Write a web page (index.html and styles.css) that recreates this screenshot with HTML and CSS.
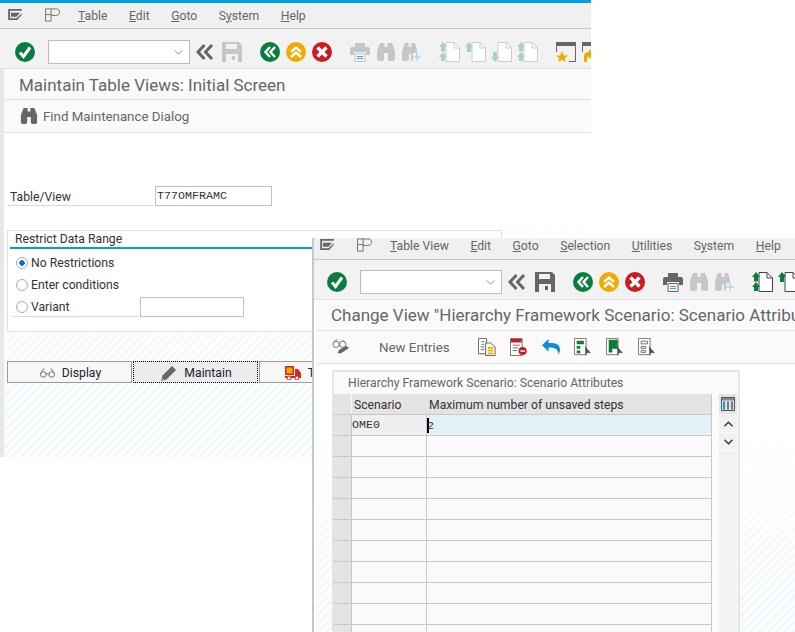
FILE: index.html
```html
<!DOCTYPE html>
<html lang="en">
<head>
    <meta charset="UTF-8">
    <title>Maintain Table Views</title>
    <link rel="stylesheet" href="styles.css">
</head>
<body>
    <svg class="defs" width="0" height="0">
        <symbol id="i-menu" viewBox="0 0 16 12"><path d="M0 0H15V2H2V10H9L15 4.500V6L10 12H0Z M3 4H13L9 8.500H3Z" fill="#666" fill-rule="evenodd"/></symbol>
        <symbol id="i-layout" viewBox="0 0 16 14"><path d="M.5 6.500V.5H6.500V13.500H.5V6.500H6.500 M6.500 .5H11Q15.500 .5 15.500 4T11 7.500H6.500" fill="none" stroke="#7a6a60"/></symbol>
        <symbol id="i-check" viewBox="0 0 20 20"><circle cx="10" cy="10" r="10" fill="#0a7d3e"/><path d="M5 10.500L8.500 14.500L15 5.500" fill="none" stroke="#fff" stroke-width="3"/></symbol>
        <symbol id="i-back" viewBox="0 0 20 20"><circle cx="10" cy="10" r="10" fill="#0a7d3e"/><path d="M10 5L5.500 10L10 15M15 5L10.500 10L15 15" fill="none" stroke="#fff" stroke-width="2.400"/></symbol>
        <symbol id="i-up" viewBox="0 0 20 20"><circle cx="10" cy="10" r="10" fill="#f0ab00"/><path d="M5 10L10 5.500L15 10M5 15L10 10.500L15 15" fill="none" stroke="#fff" stroke-width="2.400"/></symbol>
        <symbol id="i-cancel" viewBox="0 0 20 20"><circle cx="10" cy="10" r="10" fill="#cb1a22"/><path d="M5.500 5.500L14.500 14.500M14.500 5.500L5.500 14.500" fill="none" stroke="#fff" stroke-width="3.400"/></symbol>
        <symbol id="i-dbl" viewBox="0 0 18 16"><path d="M8.500 1L2 8L8.500 15M16 1L9.500 8L16 15" fill="none" stroke="#666" stroke-width="3"/></symbol>
        <symbol id="i-save" viewBox="0 0 20 20"><path fill-rule="evenodd" d="M0 0H17L20 3V20H0Z M4 2V7H15V2Z M4 12V20H16V12Z M10 14H13V18H10Z" fill="currentColor"/></symbol>
        <symbol id="i-print" viewBox="0 0 20 20"><path d="M5 5V1H15V5H18Q20 5 20 7V13H16V10H4V13H0V7Q0 5 2 5Z" fill="currentColor"/><path d="M5 11.500H15V19.500H5Z" fill="none" stroke="currentColor"/><path d="M7 14.500H13M7 16.500H13" stroke="#3aa6e8"/></symbol>
        <symbol id="i-bino" viewBox="0 0 20 20"><path d="M4 1H8.500V5H11.500V1H16L19 9V17Q19 19 17 19H14Q12 19 12 17V11H8V17Q8 19 6 19H3Q1 19 1 17V9Z" fill="currentColor"/></symbol>
        <symbol id="i-binoplus" viewBox="0 0 20 20"><path d="M3 1H6.500V5H9.500V1H13L15 8V11H11V17Q11 19 9 19V12H7V17Q7 19 5 19H2Q0 19 0 17V9Z" fill="currentColor"/><path d="M15 11V19M11 15H19" stroke="#8cd0f5" fill="none"/></symbol>
        <symbol id="i-page" viewBox="0 0 20 20"><path d="M6 .5H14L19.500 6V19.500H6Z" fill="#fff" stroke="currentColor"/><path d="M14 .5V6H19.500" fill="none" stroke="currentColor"/></symbol>
        <symbol id="i-star" viewBox="0 0 20 20"><path d="M0 0H20V4H0Z" fill="#666"/><path d="M.5 4V10M19.500 4V19.500H13" fill="none" stroke="#666"/><path d="M6 9L7.800 13.500H12L8.800 16.200L10 20L6 17.800L2 20L3.200 16.200L0 13.500H4.200Z" fill="#f0ab00"/></symbol>
        <symbol id="i-recent" viewBox="0 0 20 20"><path d="M0 0H20V4H0Z" fill="#666"/><path d="M.5 4V10" fill="none" stroke="#666"/><path d="M2 20V14Q2 10 7 10V7L13 12L7 17V14Q5 14 5 20Z" fill="#f0ab00"/></symbol>
        <symbol id="i-glasses" viewBox="0 0 16 10"><path d="M.5 6.500L3 1H5M15.500 6.500L13 1H11" fill="none" stroke="#7b8794"/><circle cx="3.500" cy="6.500" r="3" fill="none" stroke="#666"/><circle cx="12.500" cy="6.500" r="3" fill="none" stroke="#666"/><path d="M6.500 6H9.500" stroke="#666"/></symbol>
        <symbol id="i-pencil" viewBox="0 0 16 16"><path d="M0 16L1.500 10.500L11 1L15 5L5.500 14.500Z" fill="#666"/><path d="M0 16L1 12.500L3.500 15Z" fill="#aaa"/></symbol>
        <symbol id="i-truck" viewBox="0 0 16 14"><path d="M0 0H9V9H0Z" fill="#d9261c"/><path d="M1.500 1.500H7.500V7.500H1.500Z" fill="#f0ab00"/><path d="M10 3H13L16 7V12H0V10H10Z" fill="#d9261c"/><circle cx="4" cy="12" r="2" fill="#fff" stroke="#d9261c"/><circle cx="12" cy="12" r="2" fill="#fff" stroke="#d9261c"/></symbol>
        <symbol id="i-glasspen" viewBox="0 0 20 20"><circle cx="4.500" cy="7" r="3.500" fill="none" stroke="#666"/><circle cx="12" cy="7" r="3.500" fill="none" stroke="#666"/><path d="M1 6L4 2H6M15 6L12 2" fill="none" stroke="#888"/><path d="M6 17L8 13L16 9L19 11L10 17Z" fill="#666"/></symbol>
        <symbol id="i-copy" viewBox="0 0 20 20"><path d="M.5 .5H9.500V17.500H.5Z M4 4H7M4 7H7M3 10H7M3 13H7" fill="#fff" stroke="#555"/><path d="M8.500 5.500H14L19 10V19.500H8.500Z" fill="#fff" stroke="#555"/><path d="M11 10H17V12H11ZM11 13H17V15H11ZM11 16H17V18H11Z" fill="#f0ab00"/></symbol>
        <symbol id="i-delete" viewBox="0 0 20 20"><path d="M.5 .5H13.500V19.500H.5Z" fill="#fff" stroke="#666"/><path d="M1 1H13V5H1Z" fill="#cb1a22"/><path d="M3 8H11M3 11H9M3 14H8" stroke="#666"/><circle cx="14" cy="14.500" r="4.500" fill="#cb1a22"/><path d="M11.500 14.500H16.500" stroke="#fff" stroke-width="1.600"/></symbol>
        <symbol id="i-undo" viewBox="0 0 18 16"><path d="M6.500 0V4H10Q18 4 18 11Q18 13 16.500 15.500Q16 9 10 8.500H6.500V12.500L0 6.200Z" fill="#0a8fd6"/></symbol>
        <symbol id="i-selall" viewBox="0 0 20 20"><path d="M.5 .5H13.500V18.500H.5Z" fill="#fff" stroke="#7a6a60"/><path d="M3 3H11V7H3ZM3 9H7V12H3ZM3 14H7V17H3Z" fill="#0a7d3e"/><path d="M12 9L19 17L15 16.500L13 20Z" fill="#555"/></symbol>
        <symbol id="i-selblock" viewBox="0 0 20 20"><path d="M.5 .5H13.500V18.500H.5Z" fill="#fff" stroke="#7a6a60"/><path d="M3 2H13V12H7V16H3Z" fill="#0a7d3e"/><path d="M12 9L19 17L15 16.500L13 20Z" fill="#555"/></symbol>
        <symbol id="i-selnone" viewBox="0 0 20 20"><path d="M.5 .5H13.500V18.500H.5Z" fill="#fff" stroke="#7a6a60"/><path d="M3.500 3.500H10.500V6.500H3.500ZM3.500 9.500H8.500V11.500H3.500ZM3.500 14H8.500V16H3.500Z" fill="none" stroke="#666"/><path d="M12 9L19 17L15 16.500L13 20Z" fill="#555"/></symbol>
        <symbol id="i-settings" viewBox="0 0 14 14"><path d="M.5 .5H13.500V13.500H.5Z" fill="#dfe3e6" stroke="#555"/><path d="M1 1H13V3.500H1Z" fill="#8a8a8a"/><path d="M2 4.500H4V12.500H2Z" fill="#0a9ee0"/><path d="M6 4.500H8V12.500H6ZM10 4.500H12V12.500H10Z" fill="#777"/></symbol>
        <symbol id="i-chev-up" viewBox="0 0 10 6"><path d="M.5 5.500L5 1L9.500 5.500" fill="none" stroke="#234" stroke-width="1.500"/></symbol>
        <symbol id="i-chev-down" viewBox="0 0 10 6"><path d="M.5 .5L5 5L9.500 .5" fill="none" stroke="#234" stroke-width="1.500"/></symbol>
        <symbol id="i-chev-combo" viewBox="0 0 10 6"><path d="M.5 .5L5 5L9.500 .5" fill="none" stroke="#777"/></symbol>
        <symbol id="i-arrows-both" viewBox="0 0 8 20"><path d="M4 0L8 5H6V9H8L4 9.500L0 9H2V5H0ZM4 10L8 15H6V19H2V15H0Z" fill="currentColor"/></symbol>
        <symbol id="i-arrow-up" viewBox="0 0 8 10"><path d="M4 0L8 5H6V10H2V5H0Z" fill="currentColor"/></symbol>
        <symbol id="i-arrow-down" viewBox="0 0 8 10"><path d="M4 10L8 5H6V0H2V5H0Z" fill="currentColor"/></symbol>
    </svg>

    <!-- first window, behind -->
    <div class="win win-back">
        <div class="menubar">
            <svg class="ico-menu"><use href="#i-menu"/></svg>
            <svg class="ico-layout"><use href="#i-layout"/></svg>
            <nav class="menu">
                <span><u>T</u>able</span>
                <span><u>E</u>dit</span>
                <span><u>G</u>oto</span>
                <span>S<u>y</u>stem</span>
                <span><u>H</u>elp</span>
            </nav>
        </div>
        <div class="toolbar off">
            <span class="ti"><svg class="ic"><use href="#i-check"/></svg></span>
            <span class="combo"><svg class="combo-arrow"><use href="#i-chev-combo"/></svg></span>
            <span class="ti nudge-a"><svg class="ic-dbl"><use href="#i-dbl"/></svg></span>
            <span class="ti dim"><svg class="ic"><use href="#i-save"/></svg></span>
            <span class="ti gap"><svg class="ic"><use href="#i-back"/></svg></span>
            <span class="ti"><svg class="ic"><use href="#i-up"/></svg></span>
            <span class="ti"><svg class="ic"><use href="#i-cancel"/></svg></span>
            <span class="ti gap dim"><svg class="ic"><use href="#i-print"/></svg></span>
            <span class="ti dim"><svg class="ic"><use href="#i-bino"/></svg></span>
            <span class="ti dim"><svg class="ic"><use href="#i-binoplus"/></svg></span>
            <span class="ti gap pg"><svg class="ic"><use href="#i-page"/></svg><svg class="pg-arrow"><use href="#i-arrows-both"/></svg></span>
            <span class="ti pg"><svg class="ic"><use href="#i-page"/></svg><svg class="pg-arrow one top"><use href="#i-arrow-up"/></svg></span>
            <span class="ti pg"><svg class="ic"><use href="#i-page"/></svg><svg class="pg-arrow one bottom"><use href="#i-arrow-down"/></svg></span>
            <span class="ti pg"><svg class="ic"><use href="#i-page"/></svg><svg class="pg-arrow"><use href="#i-arrows-both"/></svg></span>
            <span class="ti gap"><svg class="ic"><use href="#i-star"/></svg></span>
            <span class="ti"><svg class="ic"><use href="#i-recent"/></svg></span>
        </div>
        <div class="main">
            <h1 class="title">Maintain Table Views: Initial Screen</h1>
            <div class="apptools">
                <svg class="ic-app"><use href="#i-bino"/></svg>
                <span class="find">Find Maintenance Dialog</span>
            </div>
            <div class="screen">
                <div class="field-row">
                    <label class="lbl">Table/View</label>
                    <span class="input mono">T77OMFRAMC</span>
                </div>
                <fieldset class="range">
                    <div class="range-title">Restrict Data Range</div>
                    <div class="radio-row"><span class="radio on"></span>No Restrictions</div>
                    <div class="radio-row"><span class="radio"></span>Enter conditions</div>
                    <div class="radio-row variant">
                        <span class="variant-lbl"><span class="radio"></span>Variant</span>
                        <span class="input variant-input"></span>
                    </div>
                </fieldset>
                <div class="buttons">
                    <span class="btn"><svg class="btn-glass"><use href="#i-glasses"/></svg>Display</span>
                    <span class="btn focus"><svg class="btn-pen"><use href="#i-pencil"/></svg>Maintain</span>
                    <span class="btn"><svg class="btn-truck"><use href="#i-truck"/></svg>Transport</span>
                </div>
            </div>
        </div>
    </div>

    <!-- second window, on top -->
    <div class="win win-top">
        <div class="menubar">
            <svg class="ico-menu"><use href="#i-menu"/></svg>
            <svg class="ico-layout"><use href="#i-layout"/></svg>
            <nav class="menu">
                <span><u>T</u>able View</span>
                <span><u>E</u>dit</span>
                <span><u>G</u>oto</span>
                <span><u>S</u>election</span>
                <span><u>U</u>tilities</span>
                <span>S<u>y</u>stem</span>
                <span><u>H</u>elp</span>
            </nav>
        </div>
        <div class="toolbar">
            <span class="ti"><svg class="ic"><use href="#i-check"/></svg></span>
            <span class="combo"><svg class="combo-arrow"><use href="#i-chev-combo"/></svg></span>
            <span class="ti nudge-a"><svg class="ic-dbl"><use href="#i-dbl"/></svg></span>
            <span class="ti"><svg class="ic"><use href="#i-save"/></svg></span>
            <span class="ti gap"><svg class="ic"><use href="#i-back"/></svg></span>
            <span class="ti"><svg class="ic"><use href="#i-up"/></svg></span>
            <span class="ti"><svg class="ic"><use href="#i-cancel"/></svg></span>
            <span class="ti gap"><svg class="ic"><use href="#i-print"/></svg></span>
            <span class="ti dim"><svg class="ic"><use href="#i-bino"/></svg></span>
            <span class="ti dim"><svg class="ic"><use href="#i-binoplus"/></svg></span>
            <span class="ti gap pg"><svg class="ic"><use href="#i-page"/></svg><svg class="pg-arrow"><use href="#i-arrows-both"/></svg></span>
            <span class="ti pg"><svg class="ic"><use href="#i-page"/></svg><svg class="pg-arrow one top"><use href="#i-arrow-up"/></svg></span>
        </div>
        <div class="main">
            <h1 class="title">Change View "Hierarchy Framework Scenario: Scenario Attributes": Overview</h1>
            <div class="apptools">
                <svg class="ic-app glasspen"><use href="#i-glasspen"/></svg>
                <span class="new-entries">New Entries</span>
                <span class="app-icons">
                    <svg class="ic-app"><use href="#i-copy"/></svg>
                    <svg class="ic-app"><use href="#i-delete"/></svg>
                    <svg class="ic-app"><use href="#i-undo"/></svg>
                    <svg class="ic-app"><use href="#i-selall"/></svg>
                    <svg class="ic-app"><use href="#i-selblock"/></svg>
                    <svg class="ic-app"><use href="#i-selnone"/></svg>
                </span>
            </div>
            <div class="screen screen-top">
                <section class="tablebox">
                    <div class="tablebox-title">Hierarchy Framework Scenario: Scenario Attributes</div>
                    <div class="tablewrap">
                        <table class="grid">
                            <thead>
                                <tr><th class="rh"></th><th class="c1">Scenario</th><th>Maximum number of unsaved steps</th></tr>
                            </thead>
                            <tbody>
                                <tr class="active"><td class="rh"></td><td class="key mono">OME0</td><td class="edit mono"><span class="caret"></span>2</td></tr>
                                <tr><td class="rh"></td><td></td><td></td></tr>
                                <tr><td class="rh"></td><td></td><td></td></tr>
                                <tr><td class="rh"></td><td></td><td></td></tr>
                                <tr><td class="rh"></td><td></td><td></td></tr>
                                <tr><td class="rh"></td><td></td><td></td></tr>
                                <tr><td class="rh"></td><td></td><td></td></tr>
                                <tr><td class="rh"></td><td></td><td></td></tr>
                                <tr><td class="rh"></td><td></td><td></td></tr>
                                <tr><td class="rh"></td><td></td><td></td></tr>
                                <tr><td class="rh"></td><td></td><td></td></tr>
                            </tbody>
                        </table>
                        <div class="scroller">
                            <span class="sc-btn sc-head"><svg class="sc-settings"><use href="#i-settings"/></svg></span>
                            <span class="sc-btn"><svg class="sc-chev"><use href="#i-chev-up"/></svg></span>
                            <span class="sc-btn"><svg class="sc-chev"><use href="#i-chev-down"/></svg></span>
                            <span class="sc-track"></span>
                        </div>
                    </div>
                </section>
            </div>
        </div>
    </div>
</body>
</html>
```

FILE: styles.css
```css
html, body {
    margin: 0;
    padding: 0;
}
body {
    width: 795px;
    height: 632px;
    overflow: hidden;
    position: relative;
    background-color: #fff;
    font-family: Roboto, Arial, sans-serif;
    font-size: 12.2px;
    color: #333;
}
.defs {
    position: absolute;
}
.mono {
    font-family: "Liberation Mono", monospace;
    font-size: 11.67px;
}

/* windows sit on a free desktop */
.win {
    position: absolute;
    overflow: hidden;
    display: flex;
    flex-direction: column;
    background-color: #f0f0f0;
}
.win-back {
    left: 0;
    top: 0;
    width: 591px;
    height: 457px;
    border-top: 3px solid #009de0;
    box-sizing: border-box;
}
.win-top {
    left: 312px;
    top: 238px;
    width: 483px;
    height: 394px;
    border-left: 2px solid #c8c8c8;
    box-sizing: border-box;
}

/* menu bar */
.menubar {
    display: flex;
    align-items: center;
    height: 26px;
    flex: none;
    box-sizing: border-box;
    padding-left: 8px;
    border-bottom: 1px solid #c6c6c6;
    color: #666;
}
.win-top .menubar {
    height: 22px;
    padding-left: 6px;
    padding-bottom: 6px;
}
.ico-menu {
    width: 15px;
    height: 11px;
    margin-bottom: 3px;
}
.ico-layout {
    width: 15px;
    height: 14px;
    margin-left: 22px;
    margin-bottom: 1px;
}
.menu {
    display: flex;
    gap: 21.500px;
    margin-left: 18px;
    white-space: nowrap;
}

/* system toolbar */
.toolbar {
    display: flex;
    align-items: center;
    flex: none;
    height: 40px;
    box-sizing: border-box;
    padding-left: 12px;
    padding-top: 6px;
    border-bottom: 1px solid #e2e2e2;
    background-color: #f2f2f2;
    color: #666;
    white-space: nowrap;
}
.win-top .toolbar {
    padding-left: 10px;
    padding-top: 4px;
}
.ti {
    position: relative;
    display: flex;
    flex: none;
    width: 26px;
    height: 24px;
    align-items: center;
    justify-content: center;
}
.ti.gap {
    margin-left: 12px;
}
.ti.nudge-a {
    margin-left: 2px;
    margin-right: 1px;
}
.win-top .ti.nudge-a {
    margin-right: 2px;
}
.ti.dim {
    color: #c6c6c6;
}
.ic {
    width: 20px;
    height: 20px;
}
.ic-dbl {
    width: 18px;
    height: 16px;
}
.combo {
    position: relative;
    flex: none;
    width: 142px;
    height: 24px;
    margin-left: 10px;
    box-sizing: border-box;
    border: 1px solid #bdbdbd;
    background-color: #fff;
}
.combo-arrow {
    position: absolute;
    right: 6px;
    top: 9px;
    width: 9px;
    height: 5px;
}
.pg {
    color: #444;
}
.pg-arrow {
    position: absolute;
    left: 2px;
    top: 2px;
    width: 8px;
    height: 20px;
    color: #0a7d3e;
}
.pg-arrow.one {
    height: 10px;
}
.pg-arrow.bottom {
    top: 12px;
}
.off .pg {
    color: #ccc;
}
.off .pg-arrow {
    color: #a8d3bb;
}

/* title and application toolbar */
.main {
    flex: 1;
    min-height: 0;
    display: flex;
    flex-direction: column;
    background-color: #fafafa;
    border-left: 4px solid #e8e8e8;
}
.win-top .main {
    border-left: 2px solid #fff;
}
.title {
    flex: none;
    height: 31px;
    margin: 0;
    padding-left: 15px;
    box-sizing: border-box;
    border-bottom: 1px solid #e2e2e2;
    font-size: 17px;
    font-weight: normal;
    line-height: 30px;
    color: #666;
    white-space: nowrap;
    overflow: hidden;
}
.win-back .title {
    line-height: 32px;
}
.apptools {
    display: flex;
    align-items: center;
    flex: none;
    height: 33px;
    box-sizing: border-box;
    padding-left: 16px;
    border-bottom: 1px solid #e2e2e2;
    font-size: 13.3px;
    color: #666;
}
.ic-app {
    width: 18px;
    height: 18px;
    color: #666;
}
.find {
    margin-left: 5px;
    margin-top: 1px;
}
.new-entries {
    margin-left: 29px;
}
.app-icons {
    display: flex;
    gap: 14px;
    margin-left: 28px;
}

/* first window content */
.screen {
    flex: 1;
    min-height: 0;
    background-color: #fff;
    background-image:
        linear-gradient(#fff 25%, rgba(255, 255, 255, 0) 85%),
        repeating-linear-gradient(-45deg, #f3f8fb 0 3px, #fcfdfe 3px 6px);
    padding: 53px 0 0 4px;
}
.field-row {
    display: flex;
    align-items: flex-end;
    gap: 2px;
}
.lbl {
    width: 145px;
    box-sizing: border-box;
    padding-left: 2px;
    height: 19px;
    line-height: 20px;
    border-bottom: 1px solid #d8d8d8;
}
.input {
    display: block;
    height: 20px;
    box-sizing: border-box;
    border: 1px solid #c0c0c0;
    background-color: #fff;
    line-height: 18px;
    color: #333;
}
.field-row .input {
    width: 117px;
    padding-left: 1px;
}
.range {
    width: 495px;
    height: 102px;
    margin: 24px 0 0 -1px;
    padding: 0;
    box-sizing: border-box;
    border: 1px solid #e0e0e0;
    background-color: #fff;
}
.range-title {
    height: 16px;
    margin-left: 2px;
    padding-left: 5px;
    line-height: 16px;
    border-bottom: 2px solid #009de0;
}
.radio-row {
    display: flex;
    align-items: center;
    height: 22px;
    padding-left: 8px;
    white-space: nowrap;
}
.range-title + .radio-row {
    margin-top: 3px;
}
.radio {
    width: 12px;
    height: 12px;
    flex: none;
    box-sizing: border-box;
    margin-right: 3px;
    border: 1px solid #aaa;
    border-radius: 50%;
    background-color: #fff;
}
.radio.on {
    background: radial-gradient(circle, #0a6ed1 0 2.500px, #fff 3px);
}
.variant {
    padding-left: 5px;
    align-items: flex-end;
    margin-top: -1px;
}
.variant-lbl {
    display: flex;
    align-items: center;
    width: 125px;
    height: 19px;
    padding-left: 3px;
    box-sizing: border-box;
    border-bottom: 1px solid #d8d8d8;
}
.variant-input {
    width: 104px;
    margin-left: 2px;
}
.buttons {
    display: flex;
    gap: 1px;
    margin: 29px 0 0 -1px;
}
.btn {
    display: flex;
    align-items: center;
    justify-content: center;
    flex: none;
    width: 125px;
    height: 22px;
    box-sizing: border-box;
    padding: 1px 0 0 2px;
    border: 1px solid #9c9c9c;
    background-color: #f7f7f7;
    color: #223;
}
.btn.focus {
    background-color: #ebebeb;
    border: 1px dotted #000;
}
.btn-glass {
    width: 15px;
    height: 10px;
    margin-right: 7px;
}
.btn-pen {
    width: 16px;
    height: 16px;
    margin-right: 7px;
}
.btn-truck {
    width: 16px;
    height: 14px;
    margin-right: 7px;
}

/* second window content */
.screen-top {
    padding: 6px 0 0 16px;
    overflow: hidden;
    background-image:
        linear-gradient(#fff 25%, rgba(255, 255, 255, 0) 90%),
        repeating-linear-gradient(-45deg, #f3f8fb 0 3px, #fcfdfe 3px 6px);
}
.tablebox {
    width: 408px;
    height: 300px;
    box-sizing: border-box;
    border: 2px solid #e6e6e6;
    border-bottom: 0;
    background-color: #fafafa;
}
.tablebox-title {
    height: 22px;
    padding-left: 14px;
    line-height: 23px;
    color: #666;
}
.tablewrap {
    display: flex;
    align-items: flex-start;
}
.grid {
    flex: none;
    width: 379px;
    margin-left: -1px;
    border-collapse: collapse;
    table-layout: fixed;
    border-right: 1px solid #c8c8c8;
}
.grid th,
.grid td {
    height: 20px;
    padding: 0;
    box-sizing: content-box;
    border-bottom: 1px solid #c8c8c8;
    border-left: 1px solid #c8c8c8;
}
.grid th {
    height: 19px;
    padding: 1px 0 0 2px;
    background-color: #e4e4e4;
    border-left-color: #e4e4e4;
    font-weight: normal;
    text-align: left;
    color: #333;
}
.grid th.rh,
.grid td.rh {
    width: 18px;
    padding: 0;
    background-color: #e4e4e4;
    border-left: 0;
}
.grid th.c1 {
    width: 72px;
    border-left-color: #fafafa;
}
.grid td.key {
    padding-left: 0;
    background-color: #efefef;
    color: #333;
}
.grid td.edit {
    background-color: #e5f1f9;
    color: #333;
}
.caret {
    display: inline-block;
    width: 2px;
    height: 15px;
    margin-right: -2px;
    vertical-align: middle;
    background-color: #000;
}
.scroller {
    display: flex;
    flex-direction: column;
    flex: none;
    width: 18px;
    margin-left: 7px;
    gap: 1px;
}
.sc-btn {
    display: flex;
    align-items: center;
    justify-content: center;
    height: 17px;
    background-color: #f2f2f2;
}
.sc-head {
    height: 20px;
    background-color: #e4e4e4;
}
.sc-settings {
    width: 14px;
    height: 14px;
}
.sc-chev {
    width: 9px;
    height: 6px;
}
.sc-track {
    height: 220px;
    background-color: #f2f2f2;
}
```
